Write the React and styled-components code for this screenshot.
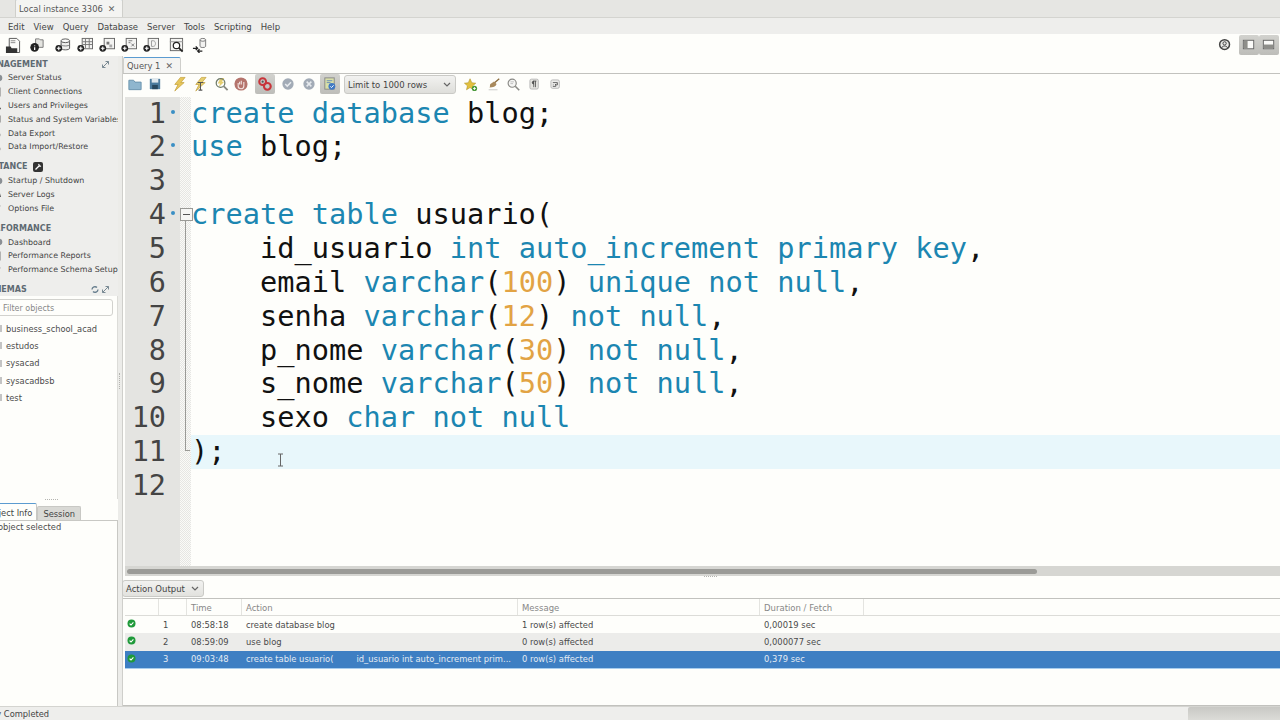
import React from "react";
import styled, { createGlobalStyle } from "styled-components";

const Global = createGlobalStyle`
  html, body { margin: 0; padding: 0; background: #fefefb; overflow: hidden; }
  * { box-sizing: border-box; }
`;

const Page = styled.div`
  width: 1280px;
  height: 720px;
  display: flex;
  flex-direction: column;
  overflow: hidden;
  background: #fefefb;
  color: #3c3c3c;
  font-family: "DejaVu Sans", sans-serif;
  font-size: 8.5px;
`;

/* window tabs + menu */
const TabBar = styled.div`
  height: 18px;
  flex: none;
  display: flex;
  align-items: flex-end;
  padding-left: 15px;
  background: #e6e6e3;
  border-bottom: 1px solid #d4d4d0;
`;
const Tab = styled.div`
  height: ${(p) => p.$h || 18}px;
  width: ${(p) => p.$w}px;
  display: flex;
  align-items: center;
  gap: ${(p) => p.$gap || 5}px;
  padding: 1px 0 0 3px;
  background: #f4f4f2;
  border: 1px solid #cfcfcb;
  border-top: 1px solid #5b9bd0;
  border-bottom: none;
  border-radius: 2px 2px 0 0;
  color: #555;
  font-size: 8.4px;
  white-space: nowrap;
`;
const CloseX = styled.span`
  font-size: 9px;
  font-weight: bold;
  color: #666;
`;
const Menu = styled.div`
  height: 16px;
  flex: none;
  display: flex;
  align-items: center;
  gap: 9px;
  padding: 1px 0 0 8px;
  background: #eeeeec;
  color: #444;
`;
const MainToolbar = styled.div`
  height: 22px;
  flex: none;
  display: flex;
  align-items: center;
  padding-left: 2px;
  background: #fefefb;
`;
const ToolBtn = styled.div`
  width: ${(p) => p.$w || 20}px;
  height: ${(p) => p.$h || 20}px;
  margin-left: ${(p) => p.$gap || 0}px;
  flex: none;
  display: flex;
  align-items: center;
  justify-content: center;
  border-radius: 2px;
  background: ${(p) => (p.$on ? "linear-gradient(#d2d2ce, #bdbdb9)" : "transparent")};
`;
const RightTools = styled.div`
  margin-left: auto;
  display: flex;
  align-items: center;
  padding-right: 1px;
`;
const UserSlot = styled(ToolBtn)`
  margin-right: 7px;
`;

/* main split */
const Body = styled.div`
  flex: 1;
  min-height: 0;
  display: flex;
`;
const Sidebar = styled.div`
  width: 118px;
  flex: none;
  display: flex;
  flex-direction: column;
  overflow: hidden;
`;
const Nav = styled.div`
  background: #eeeeec;
  height: 240px;
  padding-top: 1px;
  flex: none;
`;
const Heading = styled.div`
  height: 14px;
  margin-top: ${(p) => p.$top || 0}px;
  display: flex;
  align-items: center;
  gap: 5px;
  margin-left: -17px;
  padding-right: 9px;
  font-size: 8px;
  font-weight: bold;
  color: #5e6a72;
  white-space: nowrap;
`;
const HeadIcons = styled.div`
  margin-left: auto;
  display: flex;
  gap: 3px;
  align-items: center;
`;
const NavRow = styled.div`
  height: 13.8px;
  display: flex;
  align-items: center;
  color: #444;
  font-size: 7.9px;
  white-space: nowrap;
`;
const Schemas = styled.div`
  flex: 1;
  min-height: 0;
  background: #fefefb;
  border-right: 1px solid #dcdcd8;
  padding-top: 3px;
`;
const Filter = styled.div`
  height: 17px;
  width: 117px;
  margin-left: -4px;
  padding: 1px 0 0 6px;
  display: flex;
  align-items: center;
  border: 1px solid #d2d2ce;
  border-radius: 3px;
  color: #888;
  font-size: 8px;
`;
const SchemaList = styled.div`
  margin-top: 4px;
`;
const SchemaRow = styled.div`
  height: 17.3px;
  display: flex;
  align-items: center;
  gap: 4px;
  color: #4c4c4c;
  font-size: 8.3px;
  white-space: nowrap;
`;
const Stub = styled.span`
  width: 2px;
  height: 7px;
  background: #c4c4c4;
`;
const HGrip = styled.div`
  height: 2px;
  width: 13px;
  margin: 0 0 3px 45px;
  border-top: 1px dotted #b4b4b0;
`;
const InfoTabs = styled.div`
  height: 17px;
  flex: none;
  display: flex;
  align-items: flex-end;
  margin-left: -18px;
  background: #fefefb;
  border-bottom: 1px solid #c8c8c4;
`;
const InfoTab = styled.div`
  height: ${(p) => (p.$on ? 17 : 14)}px;
  padding: ${(p) => (p.$on ? "1px 4px 0" : "0 5px")};
  display: flex;
  align-items: center;
  border: 1px solid #c8c8c4;
  border-top-color: ${(p) => (p.$on ? "#5b9bd0" : "#c8c8c4")};
  border-bottom: none;
  border-radius: 2px 2px 0 0;
  background: ${(p) => (p.$on ? "#fefefb" : "#d9d9d5")};
  color: #444;
  font-size: 8.3px;
  white-space: nowrap;
`;
const InfoPanel = styled.div`
  height: 185px;
  flex: none;
  margin-left: -16px;
  padding-top: 1px;
  border-right: 1px solid #c8c8c4;
  color: #4c4c4c;
  font-size: 8.3px;
  white-space: nowrap;
`;
const VSplit = styled.div`
  width: 4px;
  flex: none;
  display: flex;
  align-items: center;
  justify-content: center;
  background: #ecece9;
`;
const VGrip = styled.div`
  width: 2px;
  height: 16px;
  border-left: 1px dotted #b4b4b0;
`;

/* query area */
const Content = styled.div`
  flex: 1;
  min-width: 0;
  display: flex;
  flex-direction: column;
  border-left: 1px solid #cfcfcb;
`;
const QueryTabs = styled.div`
  height: 18px;
  flex: none;
  display: flex;
  align-items: flex-end;
  border-bottom: 1px solid #c2c2be;
`;
const EditorBar = styled.div`
  height: 22.6px;
  flex: none;
  display: flex;
  align-items: flex-start;
  padding-left: 2px;
`;
const LimitSelect = styled.div`
  width: 112px;
  height: 19px;
  margin: 1px 0 0 4px;
  flex: none;
  display: flex;
  align-items: center;
  justify-content: space-between;
  padding: 0 4px 0 3px;
  background: linear-gradient(#f2f2f0, #dededa);
  border: 1px solid #cacac6;
  border-radius: 3px;
  color: #444;
  white-space: nowrap;
`;
const Editor = styled.div`
  position: relative;
  flex: 1;
  min-height: 0;
  display: flex;
  flex-direction: column;
  padding-left: 2px;
  font-family: "DejaVu Sans Mono", monospace;
`;
const Line = styled.div`
  height: 33.85px;
  flex: none;
  display: flex;
`;
const Gutter = styled.div`
  width: 55px;
  flex: none;
  padding-right: 14px;
  display: flex;
  align-items: center;
  justify-content: flex-end;
  position: relative;
  background: #e4e4e1;
  color: #444;
  font-size: 28.5px;
  line-height: 33.85px;
`;
const Marker = styled.span`
  position: absolute;
  right: 5px;
  top: 13px;
  width: 4px;
  height: 4px;
  border-radius: 50%;
  background: #3a8fc4;
`;
const Margin = styled.div`
  width: 11px;
  flex: none;
  position: relative;
  background-color: #f2f2ef;
  background-image: repeating-conic-gradient(#e6e6e3 0 25%, #fafaf7 0 50%);
  background-size: 2px 2px;
`;
const Fold = styled.span`
  position: absolute;
  left: 5px;
  width: 1px;
  background: #9a9a96;
  top: ${(p) => (p.$kind === "open" ? "17px" : 0)};
  bottom: ${(p) => (p.$kind === "end" ? "18px" : 0)};
  &::before {
    content: "";
    display: ${(p) => (p.$kind === "open" ? "block" : "none")};
    position: absolute;
    left: -5px;
    top: -7px;
    width: 11px;
    height: 11px;
    background: linear-gradient(#555, #555) center / 7px 1px no-repeat, #f6f6f4;
    border: 1px solid #9a9a96;
  }
  &::after {
    content: "";
    display: ${(p) => (p.$kind === "end" ? "block" : "none")};
    position: absolute;
    left: 0;
    bottom: 0;
    width: 5px;
    height: 1px;
    background: #9a9a96;
  }
`;
const Code = styled.pre`
  flex: 1;
  margin: 0;
  font: inherit;
  font-size: 28.65px;
  line-height: 33.85px;
  color: #111;
  background: ${(p) => (p.$current ? "#e8f7fb" : "transparent")};
`;
const Kw = styled.span`
  color: #1c86b1;
`;
const Num = styled.span`
  color: #e2a344;
`;
const Filler = styled.div`
  flex: 1;
  display: flex;
  min-height: 0;
`;
const FillGutter = styled(Gutter)`
  height: auto;
`;
const TextCursor = styled.svg`
  position: absolute;
  left: 154px;
  top: 356px;
`;
const ScrollTrack = styled.div`
  height: 10px;
  flex: none;
  display: flex;
  align-items: center;
  margin-left: 2px;
  padding-left: 2px;
  background: #d6d6d2;
`;
const ScrollThumb = styled.div`
  width: 910px;
  height: 5px;
  border-radius: 3px;
  background: #9b9b97;
`;
const RowSplit = styled.div`
  height: 4px;
  flex: none;
  display: flex;
  justify-content: center;
  padding-left: 18px;
`;
const RowGrip = styled.div`
  width: 13px;
  height: 2px;
  border-top: 1px dotted #b4b4b0;
`;
const OutputBar = styled.div`
  height: 18px;
  flex: none;
  margin-left: -1px;
`;
const OutputSelect = styled.div`
  width: 82px;
  height: 17px;
  display: flex;
  align-items: center;
  justify-content: space-between;
  padding: 0 4px 0 3px;
  background: linear-gradient(#f2f2f0, #e2e2de);
  border: 1px solid #cacac6;
  border-radius: 3px;
  color: #444;
  white-space: nowrap;
`;
const Table = styled.div`
  height: 108px;
  flex: none;
  padding-left: 2px;
  border-top: 1px solid #c2c2be;
  border-bottom: 1px solid #c2c2be;
`;
const columns = "34px 28px 55px 276px 242px 104px 1fr";
const HeaderRow = styled.div`
  height: 17px;
  display: grid;
  grid-template-columns: ${columns};
  border-bottom: 1px solid #dcdcd8;
  color: #888;
  font-size: 8.5px;
`;
const HeaderCell = styled.div`
  display: flex;
  align-items: center;
  padding: 1px 0 0 4px;
  border-right: 1px solid #e4e4e0;
`;
const Row = styled.div`
  height: 17.3px;
  display: grid;
  grid-template-columns: ${columns};
  color: ${(p) => (p.$selected ? "#e4ebf3" : "#4a4a4a")};
  font-size: 8.4px;
  background: ${(p) => (p.$selected ? "#3e7fc3" : p.$alt ? "#ececea" : "transparent")};
  box-shadow: ${(p) => (p.$selected ? "0 1px 0 #a8cdee" : "none")};
`;
const Cell = styled.div`
  display: flex;
  align-items: center;
  padding-left: 4px;
  white-space: nowrap;
  overflow: hidden;
`;
const StatusIcon = styled.div`
  padding: 3px 0 0 2px;
  svg {
    display: block;
  }
`;
const ActionTail = styled.span`
  margin-left: 23px;
`;
const StatusBar = styled.div`
  height: 14px;
  flex: none;
  display: flex;
  align-items: center;
  justify-content: space-between;
  background: #eeeeec;
  border-top: 1px solid #d4d4d0;
  font-size: 8.3px;
  color: #444;
  white-space: nowrap;
`;
const StatusText = styled.span`
  margin-left: -24px;
`;
const StatusGrip = styled.div`
  width: 92px;
  height: 13px;
  background: linear-gradient(#c8c8c4, #dcdcd8);
  border-radius: 2px 0 0 0;
`;
const SideIcon = styled.svg`
  width: 8px;
  height: 10px;
  flex: none;
  margin: 0 4px 0 -4px;
`;

const Plus = () => (
  <g>
    <circle cx="4" cy="12" r="3.6" fill="#222" />
    <path d="M2 12h4M4 10v4" stroke="#fff" strokeWidth="1.2" />
  </g>
);
const Pane = ({ children }) => (
  <g>
    <rect x="5.5" y="1.5" width="11" height="11" fill="#f4f4f2" stroke="#666" />
    {children}
    <Plus />
  </g>
);

const icons = {
  sql: (
    <g>
      <path d="M4.5 1.5h8l3 3v12h-11z" fill="#fafaf8" stroke="#555" />
      <path d="M6 4h5M6 6h5" stroke="#888" />
      <path d="M1 10h5l1 2h6v5H1z" fill="#333" />
    </g>
  ),
  info: (
    <g>
      <path d="M7 2h4l1 1h3v8H7z" fill="#e4e4e0" stroke="#777" />
      <circle cx="6" cy="11" r="4.6" fill="#222" />
      <path d="M6 9v.8M6 10.8v3" stroke="#fff" strokeWidth="1.3" />
    </g>
  ),
  db: (
    <g>
      <path d="M6.5 4v8c0 2.2 9 2.2 9 0V4" fill="#f0f0ee" stroke="#555" />
      <ellipse cx="11" cy="4" rx="4.5" ry="2" fill="#fafaf8" stroke="#555" />
      <path d="M6.5 8c0 2 9 2 9 0" fill="none" stroke="#777" />
      <Plus />
    </g>
  ),
  table: (
    <Pane>
      <path d="M9 2v10M13 2v10M6 5h10M6 8h10" stroke="#777" />
    </Pane>
  ),
  view: (
    <Pane>
      <rect x="8" y="5" width="3" height="3" fill="#777" />
      <rect x="11" y="8" width="3" height="3" fill="#aaa" />
    </Pane>
  ),
  proc: (
    <Pane>
      <path d="M8 4h4M8 6h2M11 7l3 3M11 10l3-3" stroke="#777" />
    </Pane>
  ),
  func: (
    <Pane>
      <path d="M9 4v6h2c3 0 3-6 0-6z" fill="none" stroke="#999" />
    </Pane>
  ),
  search: (
    <g>
      <rect x="2.5" y="1.5" width="13" height="13" fill="#f4f4f2" stroke="#666" />
      <path d="M2 5h14" stroke="#999" />
      <circle cx="9" cy="9" r="3.4" fill="#fff" stroke="#222" strokeWidth="1.3" />
      <path d="M11.5 11.5l4 4" stroke="#222" strokeWidth="1.8" />
    </g>
  ),
  reconnect: (
    <g>
      <path d="M8.5 3v7c0 1.6 6 1.6 6 0V3" fill="#f2f2f0" stroke="#777" />
      <ellipse cx="11.5" cy="3" rx="3" ry="1.5" fill="#fafaf8" stroke="#777" />
      <path d="M1 12h5M4 10l2 2-2 2M11 15H6M8 13l-2 2 2 2" fill="none" stroke="#222" strokeWidth="1.3" />
    </g>
  ),
  folder: <path d="M2 4.5h5l1.5 2H15v8H2z" fill="#8fb6ce" stroke="#6a93ad" />,
  save: (
    <g>
      <path d="M3 3h11v11H3z" fill="#4b7b9e" />
      <rect x="5" y="3" width="7" height="4" fill="#dfe8ee" />
      <rect x="5.5" y="9.5" width="6" height="4.5" fill="#27485f" />
    </g>
  ),
  bolt: <path d="M10 1.5h5L10.5 7H14L4 16l3.5-7H4z" fill="#e6c65c" stroke="#b79020" strokeWidth=".6" />,
  boltLine: (
    <g>
      <path d="M10 1.5h5L10.5 7H14L4 16l3.5-7H4z" fill="#e6cf70" stroke="#b79020" strokeWidth=".6" />
      <path d="M6 7h6M9 7v8M7 15h4" stroke="#555" strokeWidth="1.1" />
    </g>
  ),
  explain: (
    <g>
      <path d="M8 2h4L9.5 6H12L6 12l1.5-4H5z" fill="#e6cf70" />
      <circle cx="8" cy="7.5" r="4.6" fill="none" stroke="#6e7a68" strokeWidth="1.3" />
      <path d="M11.5 11l4 4" stroke="#8a8a80" strokeWidth="2" />
    </g>
  ),
  stop: (
    <g>
      <circle cx="8.5" cy="8.5" r="7" fill="#b5746c" />
      <path d="M5.5 7.5V11c0 2 1.5 2.5 3 2.5s3-1 3-3V6.5M7 6v3M8.8 5v4" fill="none" stroke="#f2e2df" strokeWidth="1.2" />
    </g>
  ),
  toggle: (
    <g>
      <circle cx="6" cy="6" r="3.6" fill="none" stroke="#c8353a" strokeWidth="2.2" />
      <circle cx="11" cy="11" r="3.6" fill="none" stroke="#c8353a" strokeWidth="2.2" />
      <circle cx="6" cy="6" r="1.2" fill="#555" />
    </g>
  ),
  check: (
    <g>
      <circle cx="8.5" cy="8.5" r="6" fill="#a2abb6" />
      <path d="M5.5 8.5l2.2 2.2 4-4" fill="none" stroke="#e6eaee" strokeWidth="1.6" />
    </g>
  ),
  cross: (
    <g>
      <circle cx="8.5" cy="8.5" r="6" fill="#a2abb6" />
      <path d="M6 6l5 5M11 6l-5 5" stroke="#e6eaee" strokeWidth="1.6" />
    </g>
  ),
  auto: (
    <g>
      <rect x="3" y="2" width="10" height="12" fill="#d8dfa8" stroke="#888" />
      <path d="M5 5h6M5 7h4" stroke="#6b8fb5" />
      <circle cx="10.5" cy="11" r="3.6" fill="#3f78c4" />
      <path d="M8.8 11l1.3 1.3 2.2-2.4" fill="none" stroke="#fff" />
    </g>
  ),
  star: (
    <g>
      <path d="M8 2l2 4.5 4.5.5-3.4 3 1 4.5L8 12l-4 2.5 1-4.5L1.6 7l4.4-.5z" fill="#e3c13e" stroke="#a88c20" strokeWidth=".6" />
      <circle cx="13" cy="13" r="3" fill="#4a9a3c" />
      <path d="M11.4 13h3.2M13 11.4v3.2" stroke="#fff" />
    </g>
  ),
  broom: (
    <g>
      <path d="M15 2L9 7" stroke="#8a6a3a" strokeWidth="1.5" />
      <path d="M9 5l3 3c-1 3-4 4-8 4 1-1 0-3 1-4 1-1 3-2 4-3z" fill="#a98a5c" />
      <path d="M3 14.5h10" stroke="#c4c4c0" />
    </g>
  ),
  find: (
    <g>
      <circle cx="7" cy="7" r="4.6" fill="#f6f6f4" stroke="#8a8a86" strokeWidth="1.3" />
      <path d="M5 5.5h4M5 7.5h3" stroke="#bbb" />
      <path d="M10.5 10.5l4.5 4.5" stroke="#8a8a86" strokeWidth="1.8" />
    </g>
  ),
  para: (
    <g>
      <rect x="2.5" y="1.5" width="11" height="13" rx="2" fill="#e4e4e0" stroke="#aaa" />
      <path d="M7 4h4M7.5 4v8M9.8 4v8M7.5 8C5 8 5 4 7.5 4" fill="#444" stroke="#444" />
    </g>
  ),
  wrap: (
    <g>
      <rect x="2.5" y="2.5" width="11" height="11" rx="2" fill="#ececea" stroke="#aaa" />
      <path d="M5 6h6v3H8M5 9h1M5 11h4M9.5 7.8L8 9l1.5 1.2" fill="none" stroke="#444" />
    </g>
  ),
  user: (
    <g>
      <circle cx="8" cy="8" r="6" fill="#e8e8e6" stroke="#444" strokeWidth="1.8" />
      <circle cx="8" cy="6.5" r="2" fill="none" stroke="#444" strokeWidth="1.2" />
      <path d="M4.5 12c.5-3 6.5-3 7 0" fill="none" stroke="#444" strokeWidth="1.2" />
    </g>
  ),
  sideLeft: (
    <g>
      <rect x="2.5" y="3.5" width="11" height="9" fill="#fafaf8" stroke="#666" />
      <rect x="3" y="4" width="4" height="8" fill="#8e8e8a" />
    </g>
  ),
  sideBottom: (
    <g>
      <rect x="2.5" y="3.5" width="11" height="9" fill="#fafaf8" stroke="#666" />
      <rect x="3" y="8" width="10" height="4" fill="#8e8e8a" />
    </g>
  ),
};

const Icon = ({ name, size = 16 }) => (
  <svg width={size} height={size} viewBox="0 0 17 17">
    {icons[name]}
  </svg>
);

const Chevron = () => (
  <svg width="8" height="6" viewBox="0 0 8 6">
    <path d="M1 1l3 3 3-3" fill="none" stroke="#666" strokeWidth="1.2" />
  </svg>
);
const Expand = () => (
  <svg width="7" height="7" viewBox="0 0 7 7">
    <path d="M0.5 6.5l6-6M3.5.5h3v3M.5 3.5v3h3" fill="none" stroke="#7a8a94" />
  </svg>
);
const Refresh = () => (
  <svg width="8" height="7" viewBox="0 0 8 7">
    <path d="M1 3.5a3 3 0 0 1 5-2M7 3.5a3 3 0 0 1-5 2" fill="none" stroke="#6a8090" strokeWidth="1.4" />
  </svg>
);
const Wrench = () => (
  <svg width="10" height="10" viewBox="0 0 10 10">
    <rect width="10" height="10" rx="2" fill="#333" />
    <path d="M2.5 7.5l4-4M6 2a1.5 1.5 0 0 0 2 2" fill="none" stroke="#fff" strokeWidth="1.3" />
  </svg>
);
const OkDot = () => (
  <svg width="9" height="9" viewBox="0 0 9 9">
    <circle cx="4.5" cy="4.5" r="4" fill="#1f9a3a" />
    <path d="M2.6 4.6l1.4 1.4 2.4-2.6" fill="none" stroke="#fff" strokeWidth="1.1" />
  </svg>
);
const NavGlyph = ({ shape }) => (
  <SideIcon viewBox="0 0 8 10">
    {shape === "disc" && <circle cx="3" cy="5" r="3.4" fill="#8a8f94" />}
    {shape === "page" && <rect x="0" y="1" width="4" height="8" fill="#f4f4f2" stroke="#777" />}
    {shape === "person" && <path d="M1 2v5M0 8.5h5" stroke="#666" strokeWidth="1.3" />}
    {shape === "check" && <rect x="0" y="2" width="4" height="6" fill="#b4b4b4" stroke="#666" />}
    {shape === "drum" && <ellipse cx="2" cy="7" rx="2.5" ry="2" fill="#8d8d8d" />}
    {shape === "tri" && <path d="M0 8L3.4 2 5 8z" fill="#555" />}
    {shape === "tool" && <path d="M0 2l4 2M4 2.5L2 6" stroke="#555" strokeWidth="1.1" />}
  </SideIcon>
);

const mainTools = [
  ["sql"], ["info", 2], ["db", 4], ["table"], ["view"], ["proc"], ["func"], ["search", 3], ["reconnect", 2],
];
const leftTools = [
  ["folder"], ["save"], ["bolt", 4], ["boltLine", 1], ["explain", 1], ["stop"], ["toggle", 4, true],
  ["check", 3], ["cross", 1], ["auto", 1, true],
];
const rightTools = [["star", 4], ["broom", 3], ["find"], ["para", 1], ["wrap", 1]];

const navGroups = [
  {
    title: "MANAGEMENT",
    rows: [
      ["disc", "Server Status"], ["page", "Client Connections"], ["person", "Users and Privileges"],
      ["check", "Status and System Variables"], ["drum", "Data Export"], ["drum", "Data Import/Restore"],
    ],
  },
  {
    title: "INSTANCE",
    rows: [["disc", "Startup / Shutdown"], ["tri", "Server Logs"], ["tool", "Options File"]],
  },
  {
    title: "PERFORMANCE",
    rows: [["disc", "Dashboard"], ["page", "Performance Reports"], ["tool", "Performance Schema Setup"]],
  },
];

const schemas = ["business_school_acad", "estudos", "sysacad", "sysacadbsb", "test"];

const K = Kw;
const N = Num;
const lines = [
  { dot: true, code: <><K>create database</K> blog;</> },
  { dot: true, code: <><K>use</K> blog;</> },
  { code: "" },
  { dot: true, fold: "open", code: <><K>create table</K> usuario(</> },
  { fold: "line", code: <>{"    "}id_usuario <K>int auto_increment primary key</K>,</> },
  { fold: "line", code: <>{"    "}email <K>varchar</K>(<N>100</N>) <K>unique not null</K>,</> },
  { fold: "line", code: <>{"    "}senha <K>varchar</K>(<N>12</N>) <K>not null</K>,</> },
  { fold: "line", code: <>{"    "}p_nome <K>varchar</K>(<N>30</N>) <K>not null</K>,</> },
  { fold: "line", code: <>{"    "}s_nome <K>varchar</K>(<N>50</N>) <K>not null</K>,</> },
  { fold: "line", code: <>{"    "}sexo <K>char not null</K></> },
  { fold: "end", current: true, code: <>);</> },
  { code: "" },
];

const results = [
  { n: 1, time: "08:58:18", action: "create database blog", msg: "1 row(s) affected", dur: "0,00019 sec" },
  { n: 2, time: "08:59:09", action: "use blog", msg: "0 row(s) affected", dur: "0,000077 sec", alt: true },
  {
    n: 3,
    time: "09:03:48",
    action: "create table usuario(",
    tail: "id_usuario int auto_increment prim...",
    msg: "0 row(s) affected",
    dur: "0,379 sec",
    selected: true,
  },
];

export default function App() {
  return (
    <Page>
      <Global />
      <TabBar>
        <Tab $w={108} $gap={5}>
          Local instance 3306 <CloseX>✕</CloseX>
        </Tab>
      </TabBar>
      <Menu>
        {["Edit", "View", "Query", "Database", "Server", "Tools", "Scripting", "Help"].map((m) => (
          <span key={m}>{m}</span>
        ))}
      </Menu>
      <MainToolbar>
        {mainTools.map(([name, gap]) => (
          <ToolBtn key={name} $w={22} $gap={gap}>
            <Icon name={name} />
          </ToolBtn>
        ))}
        <RightTools>
          <UserSlot $w={14}>
            <Icon name="user" size={14} />
          </UserSlot>
          <ToolBtn $on $w={20} $h={20}>
            <Icon name="sideLeft" />
          </ToolBtn>
          <ToolBtn $on $w={20} $h={20}>
            <Icon name="sideBottom" />
          </ToolBtn>
        </RightTools>
      </MainToolbar>
      <Body>
        <Sidebar>
          <Nav>
            {navGroups.map((group, i) => (
              <div key={group.title}>
                <Heading $top={i ? 6 : 0}>
                  {group.title}
                  {i === 0 && (
                    <HeadIcons>
                      <Expand />
                    </HeadIcons>
                  )}
                  {i === 1 && <Wrench />}
                </Heading>
                {group.rows.map(([shape, label]) => (
                  <NavRow key={label}>
                    <NavGlyph shape={shape} />
                    {label}
                  </NavRow>
                ))}
              </div>
            ))}
            <Heading $top={6}>
              SCHEMAS
              <HeadIcons>
                <Refresh />
                <Expand />
              </HeadIcons>
            </Heading>
          </Nav>
          <Schemas>
            <Filter>Filter objects</Filter>
            <SchemaList>
              {schemas.map((s) => (
                <SchemaRow key={s}>
                  <Stub />
                  {s}
                </SchemaRow>
              ))}
            </SchemaList>
          </Schemas>
          <HGrip />
          <InfoTabs>
            <InfoTab $on>Object Info</InfoTab>
            <InfoTab>Session</InfoTab>
          </InfoTabs>
          <InfoPanel>No object selected</InfoPanel>
        </Sidebar>
        <VSplit>
          <VGrip />
        </VSplit>
        <Content>
          <QueryTabs>
            <Tab $w={58} $h={16} $gap={5}>
              Query 1 <CloseX>✕</CloseX>
            </Tab>
          </QueryTabs>
          <EditorBar>
            {leftTools.map(([name, gap, on]) => (
              <ToolBtn key={name} $gap={gap} $on={on}>
                <Icon name={name} />
              </ToolBtn>
            ))}
            <LimitSelect>
              Limit to 1000 rows
              <Chevron />
            </LimitSelect>
            {rightTools.map(([name, gap]) => (
              <ToolBtn key={name} $gap={gap}>
                <Icon name={name} size={name === "para" || name === "wrap" ? 13 : 15} />
              </ToolBtn>
            ))}
          </EditorBar>
          <Editor>
            {lines.map((line, i) => (
              <Line key={i}>
                <Gutter>
                  {i + 1}
                  {line.dot && <Marker />}
                </Gutter>
                <Margin>{line.fold && <Fold $kind={line.fold} />}</Margin>
                <Code $current={line.current}>{line.code}</Code>
              </Line>
            ))}
            <Filler>
              <FillGutter />
              <Margin />
            </Filler>
            <TextCursor width="7" height="14" viewBox="0 0 7 14">
              <path d="M1 1h5M3.5 1v12M1 13h5" fill="none" stroke="#666" />
            </TextCursor>
          </Editor>
          <ScrollTrack>
            <ScrollThumb />
          </ScrollTrack>
          <RowSplit>
            <RowGrip />
          </RowSplit>
          <OutputBar>
            <OutputSelect>
              Action Output
              <Chevron />
            </OutputSelect>
          </OutputBar>
          <Table>
            <HeaderRow>
              <HeaderCell />
              <HeaderCell />
              <HeaderCell>Time</HeaderCell>
              <HeaderCell>Action</HeaderCell>
              <HeaderCell>Message</HeaderCell>
              <HeaderCell>Duration / Fetch</HeaderCell>
            </HeaderRow>
            {results.map((r) => (
              <Row key={r.n} $alt={r.alt} $selected={r.selected}>
                <StatusIcon>
                  <OkDot />
                </StatusIcon>
                <Cell>{r.n}</Cell>
                <Cell>{r.time}</Cell>
                <Cell>
                  {r.action}
                  {r.tail && <ActionTail>{r.tail}</ActionTail>}
                </Cell>
                <Cell>{r.msg}</Cell>
                <Cell>{r.dur}</Cell>
              </Row>
            ))}
          </Table>
        </Content>
      </Body>
      <StatusBar>
        <StatusText>Query Completed</StatusText>
        <StatusGrip />
      </StatusBar>
    </Page>
  );
}
